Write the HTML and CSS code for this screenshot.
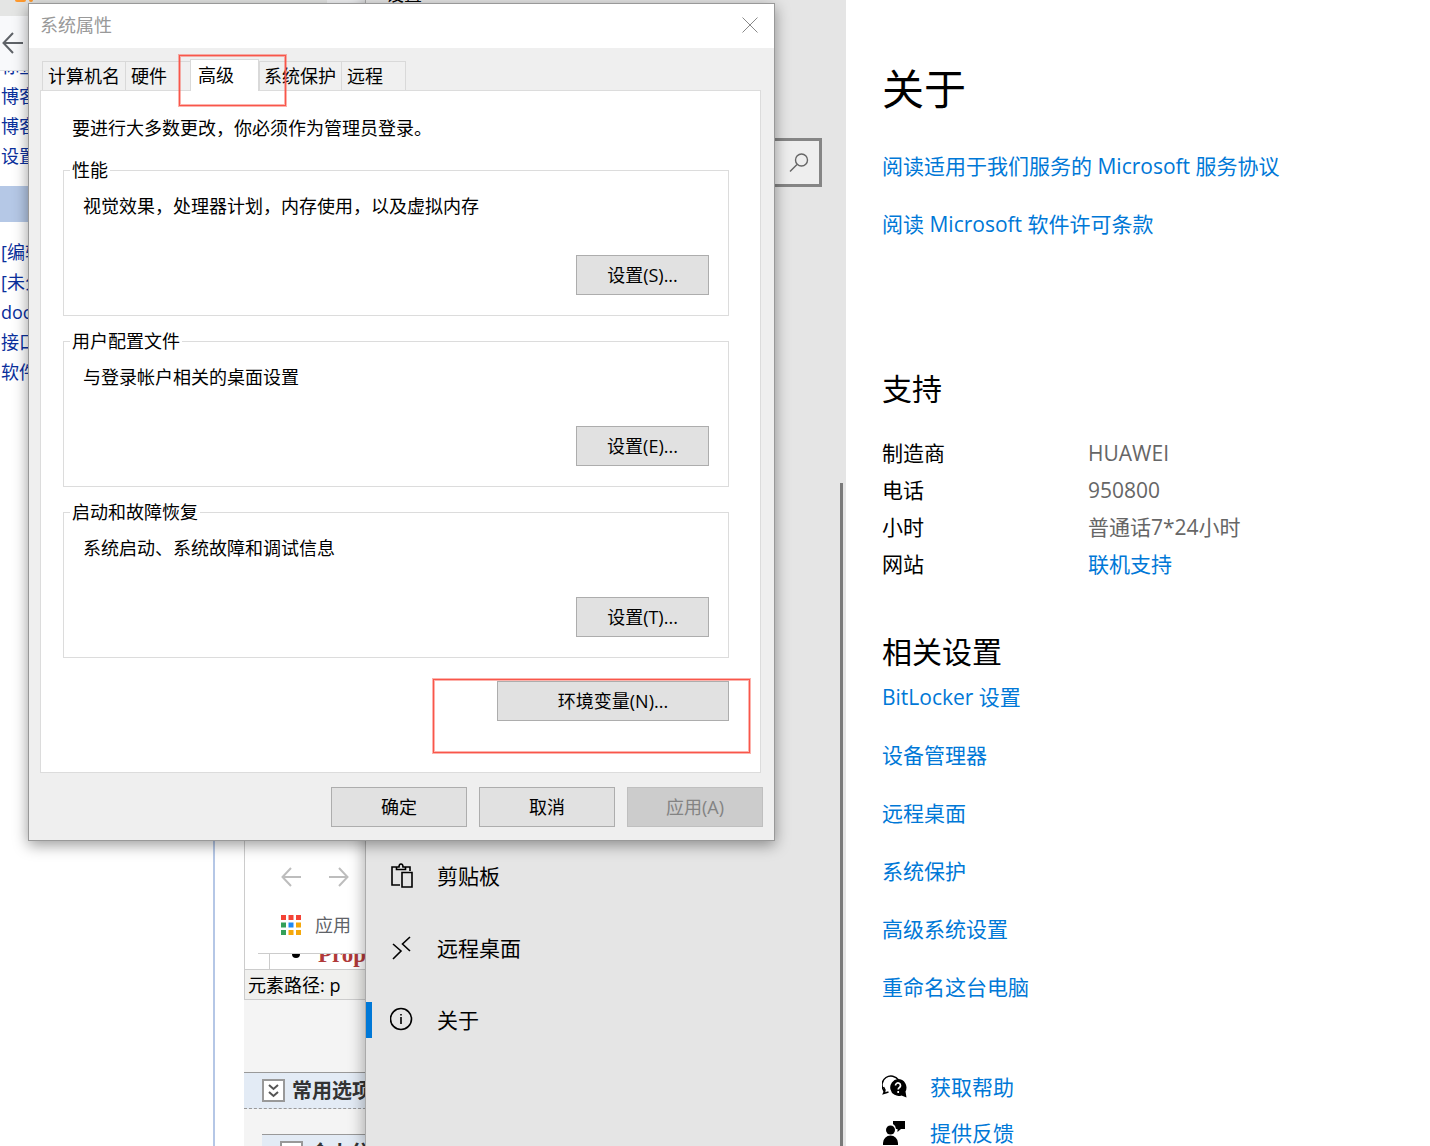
FILE: index.html
```html
<!DOCTYPE html>
<html lang="zh-CN">
<head>
<meta charset="utf-8">
<title>系统属性</title>
<link rel="stylesheet" href="styles.css">
</head>
<body>
<div class="desktop">

  <section class="window blog">
    <div class="blog-tabs"><span class="blog-favicon"></span><span class="blog-favicon favicon-dot"></span></div>
    <div class="blog-toolbar">
      <button class="icon-button" type="button" aria-label="后退">
        <svg width="22" height="22" viewBox="0 0 22 22" fill="none" stroke="#5f6368" stroke-width="2"><path d="M21 11H2M11 1L1.500 11L11 21"/></svg>
      </button>
    </div>
    <nav class="blog-side">
      <div class="blog-list blog-list-first">
        <a href="#">标签</a>
        <a href="#">博客</a>
        <a href="#">博客</a>
        <a href="#">设置</a>
      </div>
      <div class="blog-band"></div>
      <div class="blog-list">
        <a href="#">[编辑]</a>
        <a href="#">[未分]</a>
        <a href="#">docker</a>
        <a href="#">接口</a>
        <a href="#">软件</a>
      </div>
    </nav>
  </section>

  <section class="window editor">
    <div class="browser-bar">
      <div class="browser-nav">
        <svg width="20" height="20" viewBox="0 0 20 20" fill="none" stroke="#bdbdbd" stroke-width="2"><path d="M20 10H2M10 1L1.500 10L10 19"/></svg>
        <svg width="20" height="20" viewBox="0 0 20 20" fill="none" stroke="#bdbdbd" stroke-width="2"><path d="M0 10H18M10 1L18.500 10L10 19"/></svg>
      </div>
      <div class="browser-apps">
        <svg width="20" height="20" viewBox="0 0 20 20"><path fill="#f44336" d="M0 0h5v5H0zM7.500 0h5v5h-5zM15 0h5v5h-5z"/><path fill="#34a05a" d="M0 7.500h5v5H0zM0 15h5v5H0z"/><path fill="#1e88f5" d="M7.500 7.500h5v5h-5z"/><path fill="#f5a80b" d="M15 7.500h5v5h-5zM7.500 15h5v5h-5zM15 15h5v5h-5z"/></svg>
        <span>应用</span>
      </div>
    </div>
    <div class="editor-body">
      <div class="editor-page"><span class="editor-bullet"></span><span class="editor-line">Property</span></div>
    </div>
    <div class="editor-path">元素路径: p</div>
    <div class="option-area">
      <div class="option-head">
        <svg width="23" height="23" viewBox="0 0 23 23" fill="#fff" stroke="#999" stroke-width="2"><path d="M1 1h21v21H1z"/><path fill="none" stroke="#555" d="M7 6l4.500 4L16 6M7 13l4.500 4L16 13"/></svg>
        <span>常用选项</span>
      </div>
      <div class="option-head option-sub">
        <svg width="23" height="23" viewBox="0 0 23 23" fill="#fff" stroke="#999" stroke-width="2"><path d="M1 1h21v21H1z"/></svg>
        <span>个人分类</span>
      </div>
    </div>
  </section>

  <section class="window settings">
    <aside class="settings-side">
      <div class="settings-title">设置</div>
      <div class="search">
        <input type="text" aria-label="查找设置">
        <svg width="20" height="20" viewBox="0 0 20 20" fill="none" stroke="#666" stroke-width="1.400"><circle cx="12.500" cy="7" r="6"/><path d="M8 11.500L1 18.500"/></svg>
      </div>
      <nav class="settings-nav">
        <a href="#"><svg width="24" height="26" viewBox="0 0 24 26" fill="none" stroke="#000" stroke-width="1.600"><path d="M10 22H2V4h4M16 4h4v4M6.500 6.500V4H9c0-2 1-3 2-3s2 1 2 3h2.500v2.500zM12 9.500h10V24H12z"/></svg><span>剪贴板</span></a>
        <a href="#"><svg width="24" height="26" viewBox="0 0 24 26" fill="none" stroke="#000" stroke-width="1.600"><path d="M3 9l8 7-8 8M20 2l-7.500 7L20 16"/></svg><span>远程桌面</span></a>
        <a href="#" class="current"><svg width="24" height="26" viewBox="0 0 24 26" fill="none" stroke="#000" stroke-width="1.600"><circle cx="11" cy="12" r="10.500"/><path d="M11 10v7M11 7v1.600"/></svg><span>关于</span></a>
      </nav>
    </aside>

    <main class="about">
      <h1>关于</h1>
      <div class="links">
        <a href="#">阅读适用于我们服务的 Microsoft 服务协议</a>
        <a href="#">阅读 Microsoft 软件许可条款</a>
      </div>
      <h2 class="support-title">支持</h2>
      <table class="support">
        <tr><th scope="row">制造商</th><td>HUAWEI</td></tr>
        <tr><th scope="row">电话</th><td>950800</td></tr>
        <tr><th scope="row">小时</th><td>普通话7*24小时</td></tr>
        <tr><th scope="row">网站</th><td><a href="#">联机支持</a></td></tr>
      </table>
      <h2 class="related-title">相关设置</h2>
      <div class="links">
        <a href="#">BitLocker 设置</a>
        <a href="#">设备管理器</a>
        <a href="#">远程桌面</a>
        <a href="#">系统保护</a>
        <a href="#">高级系统设置</a>
        <a href="#">重命名这台电脑</a>
      </div>
      <div class="help">
        <a href="#"><svg width="26" height="26" viewBox="0 0 26 26"><path d="M3 18.500L1.500 16A8 8 0 1 1 16.500 6" fill="none" stroke="#000" stroke-width="1.500"/><path d="M1.500 13l1.500 3-1.500 3.500 5-1.500" fill="none" stroke="#000" stroke-width="1.500"/><path d="M16 5a8.500 8.500 0 0 1 7.500 12.500l1 6-5-2A8.500 8.500 0 1 1 16 5z"/><path d="M13.500 11.500a2.500 2.500 0 1 1 4 2q-1.300.8-1.300 2M16.200 17v2" fill="none" stroke="#fff" stroke-width="1.700"/></svg><span>获取帮助</span></a>
        <a href="#"><svg width="26" height="26" viewBox="0 0 26 26"><circle cx="8.500" cy="10" r="4.500"/><path d="M1 25v-2a7.500 7.500 0 0 1 15 0v2zM11 1h12v8h-4l-3.500 3V9H14a6 6 0 0 0-3-5z"/></svg><span>提供反馈</span></a>
      </div>
    </main>
  </section>

  <section class="window dialog" role="dialog" aria-label="系统属性">
    <header class="dialog-title">
      <span>系统属性</span>
      <button class="icon-button" type="button" aria-label="关闭">
        <svg width="16" height="16" viewBox="0 0 16 16" stroke="#888" stroke-width="1"><path d="M.5.5l15 15M15.500.5l-15 15"/></svg>
      </button>
    </header>
    <div class="dialog-body">
      <div class="tabs" role="tablist">
        <button class="tab tab-name" type="button" role="tab">计算机名</button>
        <button class="tab tab-hardware" type="button" role="tab">硬件</button>
        <button class="tab tab-active" type="button" role="tab" aria-selected="true">高级</button>
        <button class="tab tab-protect" type="button" role="tab">系统保护</button>
        <button class="tab tab-remote" type="button" role="tab">远程</button>
      </div>
      <div class="panel">
        <p class="notice">要进行大多数更改，你必须作为管理员登录。</p>
        <fieldset class="group">
          <legend>性能</legend>
          <p>视觉效果，处理器计划，内存使用，以及虚拟内存</p>
          <button class="button" type="button">设置(S)...</button>
        </fieldset>
        <fieldset class="group">
          <legend>用户配置文件</legend>
          <p>与登录帐户相关的桌面设置</p>
          <button class="button" type="button">设置(E)...</button>
        </fieldset>
        <fieldset class="group">
          <legend>启动和故障恢复</legend>
          <p>系统启动、系统故障和调试信息</p>
          <button class="button" type="button">设置(T)...</button>
        </fieldset>
        <button class="button button-env" type="button">环境变量(N)...</button>
      </div>
      <footer class="actions">
        <button class="button" type="button">确定</button>
        <button class="button" type="button">取消</button>
        <button class="button" type="button" disabled>应用(A)</button>
      </footer>
    </div>
    <div class="mark mark-tab"></div>
    <div class="mark mark-env"></div>
  </section>

</div>
</body>
</html>
```
FILE: styles.css
```css
* { box-sizing: border-box; }

body {
  margin: 0;
  background: #fff;
  color: #000;
  font: 400 18px/24px "Open Sans", "Noto Sans CJK SC", sans-serif;
}

h1, h2, p { margin: 0; font-weight: 400; }

a { color: #0078d7; text-decoration: none; }

button { font: inherit; color: inherit; }

svg { display: block; flex: none; }

.desktop {
  position: relative;
  height: 100vh;
  overflow: hidden;
}

.window {
  position: absolute;
  overflow: hidden;
}

.icon-button {
  display: block;
  padding: 0;
  border: 0;
  background: none;
}

/* blog page at the far left */
.blog {
  left: 0;
  top: 0;
  bottom: 0;
  width: 366px;
  display: flex;
  flex-direction: column;
}

.blog-tabs {
  display: flex;
  gap: 3px;
  height: 16px;
  padding-left: 15px;
  background: linear-gradient(to right, #e4e5e4 327px, #f2f3f5 327px);
}

.blog-favicon {
  width: 11px;
  height: 2px;
  border-radius: 0 0 6px 6px;
  background: #ff9a2e;
}

.favicon-dot { width: 4px; }

.blog-toolbar {
  height: 55px;
  padding: 16px 2px;
  border-bottom: 1px solid #dcdfe3;
  background: #f8f9fb;
}

.blog-side {
  flex: 1;
  width: 215px;
  overflow: hidden;
  border-right: 2px solid #b5c7e6;
}

.blog-list {
  padding: 15px 1px;
  line-height: 30px;
}

.blog-list-first { margin-top: -20px; padding-top: 0; }

.blog-list a { display: block; color: #0a2f9c; }

.blog-band { height: 36px; background: #b5c8e6; }

/* editor and browser between the blog and the settings */
.editor {
  left: 244px;
  bottom: 0;
  width: 122px;
  height: 320px;
  background: #f4f4f4;
}

.browser-bar {
  height: 127px;
  padding-left: 36px;
  border-left: 1px solid #ccc;
  background: #fff;
}

.browser-nav {
  display: flex;
  gap: 28px;
  padding-top: 41px;
}

.browser-apps {
  display: flex;
  align-items: center;
  gap: 14px;
  padding-top: 26px;
  color: #5f6368;
}

.editor-body {
  padding-left: 13px;
  border-left: 1px solid #ccc;
  background: #fff;
}

.editor-page {
  display: flex;
  gap: 18px;
  height: 16px;
  padding-left: 34px;
  overflow: hidden;
  border-top: 1px solid #ccc;
  background: linear-gradient(#ccc, #ccc) 11px 0 / 1px 100% no-repeat;
}

.editor-bullet {
  flex: none;
  width: 8px;
  height: 4px;
  border-radius: 0 0 4px 4px;
  background: #000;
}

.editor-line {
  flex: none;
  margin-top: -11px;
  color: #b03a3a;
  font: bold 23px/24px "Liberation Serif", serif;
  white-space: nowrap;
}

.editor-path {
  height: 31px;
  padding: 3px;
  border: 1px solid #ccc;
  border-right: 0;
  background: #f0f0ee;
}

.option-area { padding-top: 72px; }

.option-head {
  display: flex;
  align-items: center;
  gap: 7px;
  height: 37px;
  padding-left: 18px;
  border-top: 1px solid #999;
  border-bottom: 1px dashed #999;
  background: #e3ebf5;
  color: #333;
  font-size: 20px;
  font-weight: 700;
  white-space: nowrap;
}

.option-sub { margin: 25px 0 0 18px; }

/* settings window */
.settings {
  left: 365px;
  right: 0;
  top: 0;
  bottom: 0;
  display: grid;
  grid-template-columns: 480px 1fr;
  overflow: visible;
  border-left: 1px solid #aaa;
  background: #fff;
  box-shadow: -2px 0 14px rgba(0, 0, 0, 0.3);
  font-size: 21px;
  line-height: 28px;
}

.settings-side {
  display: flex;
  flex-direction: column;
  background: linear-gradient(#7a7a7a, #7a7a7a) right 3px top 483px / 3px 100% no-repeat #e5e5e5;
}

.settings-title {
  height: 138px;
  margin-top: -18px;
  padding-left: 20px;
  font-size: 18px;
  line-height: 24px;
}

.search {
  display: flex;
  align-items: center;
  height: 49px;
  margin: 18px 24px;
  padding-right: 10px;
  border: 3px solid #858585;
  background: #eee;
}

.search input {
  flex: 1;
  min-width: 0;
  border: 0;
  background: none;
  font: inherit;
}

.settings-nav { margin-top: 617px; }

.settings-nav a {
  display: flex;
  align-items: center;
  gap: 23px;
  height: 36px;
  margin-top: 36px;
  padding-left: 18px;
  border-left: 6px solid transparent;
  color: #000;
}

.settings-nav .current { border-color: #0078d7; }

.about { padding: 59px 24px 0 36px; }

.about h1 { font-size: 42px; line-height: 60px; }

.about h2 { font-size: 30px; line-height: 40px; }

.links {
  display: flex;
  flex-direction: column;
  align-items: flex-start;
  gap: 30px;
}

h1 + .links { margin-top: 33px; }

.about .support-title { margin-top: 131px; }

.support {
  margin-top: 26px;
  border-spacing: 0;
  line-height: 37px;
}

.support th {
  width: 206px;
  padding: 0;
  font-weight: 400;
  text-align: left;
}

.support td { padding: 0; color: #666; }

.about .related-title { margin: 49px 0 11px; }

.help {
  display: grid;
  gap: 18px;
  margin-top: 72px;
}

.help a {
  display: flex;
  align-items: center;
  gap: 22px;
}

/* system properties dialog */
.dialog {
  left: 28px;
  top: 3px;
  width: 747px;
  border: 1px solid #999;
  background: #efefef;
  box-shadow: 0 4px 14px rgba(0, 0, 0, 0.4);
}

.dialog-title {
  display: flex;
  align-items: center;
  justify-content: space-between;
  height: 44px;
  padding: 0 16px 2px 11px;
  background: #fff;
  color: #999;
}

.dialog-body { padding: 12px 13px 13px 11px; }

.tabs {
  display: flex;
  align-items: flex-end;
  padding-left: 2px;
}

.tab {
  height: 29px;
  padding: 0 5px;
  border: 1px solid #d9d9d9;
  border-width: 1px 0 0 1px;
  background: #f0f0f0;
  text-align: left;
  white-space: nowrap;
}

.tab-name { width: 83px; }
.tab-hardware { width: 65px; }
.tab-protect { width: 82px; padding: 0 4px; }
.tab-remote { width: 65px; border-right-width: 1px; }

.tab-active {
  position: relative;
  width: 69px;
  height: 32px;
  margin: -1px 0;
  padding: 0 7px 2px;
  border-right-width: 1px;
  background: #fff;
}

.panel {
  display: flex;
  flex-direction: column;
  padding: 25px 31px 51px 22px;
  border: 1px solid #dcdcdc;
  background: #fff;
}

.notice { padding-left: 9px; }

.group {
  margin: 18px 0 0;
  padding: 12px 19px 20px;
  border: 1px solid #dcdcdc;
}

.group + .group { margin-top: 13px; }

.group legend { padding: 0 2px; margin-left: -13px; }

.button {
  height: 40px;
  padding: 0;
  border: 1px solid #adadad;
  background: #e1e1e1;
}

.group .button {
  display: block;
  width: 133px;
  margin: 37px 0 0 auto;
}

.button-env {
  width: 232px;
  margin-top: 23px;
  align-self: flex-end;
}

.actions {
  display: flex;
  justify-content: flex-end;
  gap: 12px;
  margin: 14px -2px 0 0;
}

.actions .button { width: 136px; }

.button:disabled {
  border-color: #bfbfbf;
  background: #ccc;
  color: #838383;
}

/* red highlight frames */
.mark {
  position: absolute;
  border: 1px solid #f9564a;
  box-shadow: 0 0 0 1px rgba(249, 86, 74, 0.45), inset 0 0 0 1px rgba(249, 86, 74, 0.45);
  pointer-events: none;
}

.mark-tab { left: 150px; top: 51px; width: 107px; height: 51px; }
.mark-env { left: 404px; top: 675px; width: 317px; height: 74px; }
```
